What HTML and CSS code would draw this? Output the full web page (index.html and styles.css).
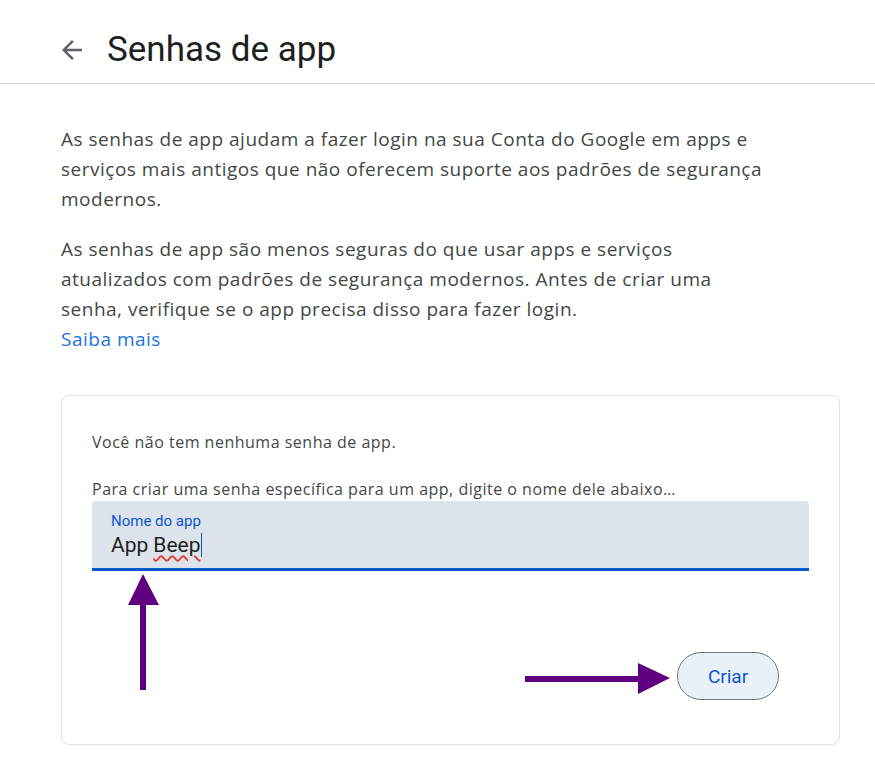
FILE: index.html
```html
<!DOCTYPE html>
<html lang="pt-BR">
<head>
<meta charset="utf-8">
<title>Senhas de app</title>
<link rel="stylesheet" href="styles.css">
</head>
<body>
<header class="header">
  <span class="back">
    <svg viewBox="0 -960 960 960" width="30" height="30"><path fill="#5f6368" d="M313-440l224 224-57 56-320-320 320-320 57 56-224 224h487v80H313z"/></svg>
  </span>
  <h1 class="title">Senhas de app</h1>
</header>
<main class="content">
  <p class="para">As senhas de app ajudam a fazer login na sua Conta do Google em apps e serviços mais antigos que não oferecem suporte aos padrões de segurança modernos.</p>
  <p class="para p2">As senhas de app são menos seguras do que usar apps e serviços atualizados com padrões de segurança modernos. Antes de criar uma senha, verifique se o app precisa disso para fazer login.<br><a class="link" href="#">Saiba mais</a></p>
  <section class="card">
    <p class="card-text first">Você não tem nenhuma senha de app.</p>
    <p class="card-text">Para criar uma senha específica para um app, digite o nome dele abaixo…</p>
    <div class="field">
      <span class="field-label">Nome do app</span>
      <span class="field-value">App <span class="spell">Beep</span><span class="caret"></span></span>
    </div>
    <div class="actions">
      <button class="btn">Criar</button>
    </div>
  </section>
</main>
<svg class="annot" width="875" height="768" viewBox="0 0 875 768">
  <rect x="140" y="602" width="6" height="88" fill="#600080"/>
  <polygon points="128,605 159,605 143,574" fill="#600080"/>
  <rect x="525" y="676" width="115" height="6" fill="#600080"/>
  <polygon points="638,663 638,694 670,678" fill="#600080"/>
</svg>
</body>
</html>
```

FILE: styles.css
```css
* { box-sizing: border-box; }
html, body { margin: 0; padding: 0; background: #ffffff; }
body {
  font-family: "Open Sans", Roboto, Arial, sans-serif;
  color: #444746;
  position: relative;
  width: 875px;
  min-height: 768px;
  overflow: hidden;
}
.header {
  display: flex;
  align-items: center;
  height: 84px;
  border-bottom: 1px solid #dadce0;
  padding-left: 57px;
  padding-top: 16px;
}
.back { display: flex; width: 30px; height: 30px; margin-right: 20px; }
.title {
  margin: 0;
  font-family: Roboto, Arial, sans-serif;
  font-weight: 400;
  font-size: 35px;
  color: #1f1f1f;
}
.content {
  padding: 40px 35px 0 61px;
}
.para {
  margin: 0 0 20px 0;
  font-size: 19px;
  letter-spacing: 0.5px;
  line-height: 30px;
  max-width: 725px;
}
.p2 { max-width: 660px; }
.link { color: #1a73e8; text-decoration: none; }
.card {
  margin-top: 41px;
  border: 1px solid #e0e2e4;
  border-radius: 8px;
  padding: 34px 30px 44px 30px;
  width: 779px;
}
.card-text {
  margin: 0;
  font-size: 16px;
  letter-spacing: 0.5px;
  line-height: 24px;
  color: #444746;
}
.card-text.first { margin-bottom: 23px; }
.field {
  background: #dde3ea;
  border-bottom: 3px solid #0b57d0;
  height: 70px;
  border-radius: 4px 4px 0 0;
  padding: 11px 19px 0 19px;
  display: flex;
  flex-direction: column;
}
.field-label {
  font-family: Roboto, Arial, sans-serif;
  font-size: 15px;
  line-height: 18px;
  color: #0b57d0;
}
.field-value {
  font-family: Roboto, Arial, sans-serif;
  font-size: 21px;
  line-height: 30px;
  color: #1f1f1f;
  display: flex;
  align-items: center;
}
.spell {
  margin-left: 5px;
  text-decoration: underline wavy #e53935;
  text-decoration-thickness: 1.5px;
  text-underline-offset: 3px;
}
.caret {
  display: inline-block;
  width: 1px;
  height: 24px;
  background: #0b57d0;
  margin-left: 1px;
}
.actions {
  display: flex;
  justify-content: flex-end;
  padding-top: 81px;
  padding-right: 30px;
}
.btn {
  width: 102px;
  height: 48px;
  border-radius: 24px;
  border: 1px solid #747775;
  background: #ebf1fb;
  color: #0b57d0;
  font-family: Roboto, Arial, sans-serif;
  font-size: 19px;
  padding: 0;
}
.annot {
  position: absolute;
  left: 0;
  top: 0;
  pointer-events: none;
}
```
